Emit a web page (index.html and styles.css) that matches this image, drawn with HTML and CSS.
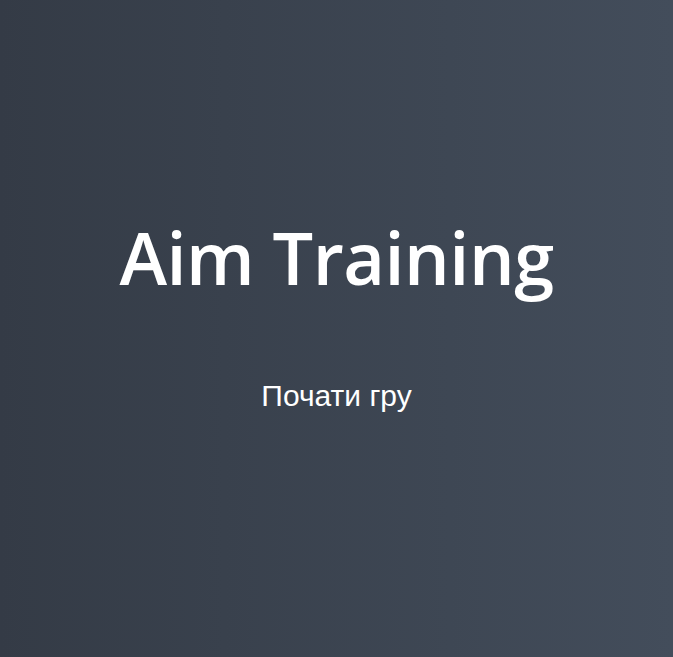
FILE: index.html
```html
<!DOCTYPE html>
<html lang="uk">
<head>
<meta charset="utf-8">
<link rel="stylesheet" href="styles.css">
<title>Aim Training</title>
</head>
<body>
<main class="screen">
  <h1 class="title">Aim Training</h1>
  <button class="start">Почати гру</button>
</main>
</body>
</html>
```
FILE: styles.css
```css
html, body {
  margin: 0;
  height: 100%;
}
body {
  background: linear-gradient(90deg, #343b46 0%, #434d5b 100%);
  color: #fff;
}
.screen {
  box-sizing: border-box;
  height: 100%;
  padding-bottom: 22px;
  display: flex;
  flex-direction: column;
  align-items: center;
  justify-content: center;
  gap: 70px;
}
.title {
  margin: 0;
  font-family: "Open Sans", sans-serif;
  font-weight: 600;
  font-size: 72px;
  line-height: 1.2;
  letter-spacing: -0.5px;
}
.start {
  background: transparent;
  border: none;
  color: #fff;
  font-family: "Liberation Sans", Arial, sans-serif;
  font-size: 30px;
  padding: 8px 16px;
  cursor: pointer;
}
```
